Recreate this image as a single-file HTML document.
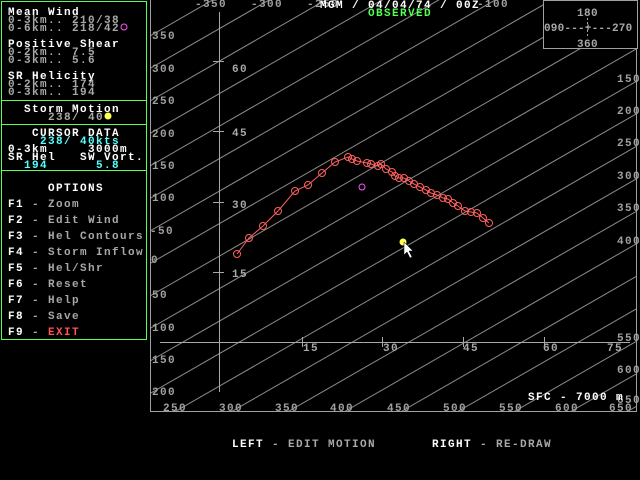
<!DOCTYPE html>
<html><head><meta charset="utf-8"><style>
html,body{margin:0;padding:0;background:#000;width:640px;height:480px;overflow:hidden;}
svg{display:block;}
text{font-family:"Liberation Mono",monospace;font-weight:bold;font-size:11px;letter-spacing:1.4px;}
.g{fill:#a8a8a8}.w{fill:#fff}.c{fill:#55ffff}.gr{fill:#55ff55}.r{fill:#ff5555}
.s{font-size:9.5px;font-weight:normal;fill:#a0a0a0;letter-spacing:0.6px}
</style></head><body>
<svg width="640" height="480" viewBox="0 0 640 480" xmlns="http://www.w3.org/2000/svg">
<rect width="640" height="480" fill="#000"/>
<defs><clipPath id="cp"><rect x="151" y="0" width="485" height="411"/></clipPath></defs>
<g clip-path="url(#cp)" stroke="#8c8c8c" stroke-width="1">
<line x1="150" y1="36" x2="636" y2="-243.5"/>
<line x1="150" y1="68.5" x2="636" y2="-211"/>
<line x1="150" y1="101" x2="636" y2="-178.5"/>
<line x1="150" y1="133.5" x2="636" y2="-146"/>
<line x1="150" y1="166" x2="636" y2="-113.5"/>
<line x1="150" y1="198.5" x2="636" y2="-81"/>
<line x1="150" y1="231" x2="636" y2="-48.5"/>
<line x1="150" y1="263.5" x2="636" y2="-16"/>
<line x1="150" y1="296" x2="636" y2="16.5"/>
<line x1="150" y1="328.5" x2="636" y2="49"/>
<line x1="150" y1="361" x2="636" y2="81.5"/>
<line x1="150" y1="393.5" x2="636" y2="114"/>
<line x1="150" y1="426" x2="636" y2="146.5"/>
<line x1="150" y1="458.5" x2="636" y2="179"/>
<line x1="150" y1="491" x2="636" y2="211.5"/>
<line x1="150" y1="523.5" x2="636" y2="244"/>
<line x1="150" y1="556" x2="636" y2="276.5"/>
<line x1="150" y1="588.5" x2="636" y2="309"/>
<line x1="150" y1="621" x2="636" y2="341.5"/>
<line x1="150" y1="653.5" x2="636" y2="374"/>
<line x1="150" y1="686" x2="636" y2="406.5"/>
<line x1="150" y1="718.5" x2="636" y2="439"/>
</g>
<path d="M150.5 0 V411.5 H636.5 V48" fill="none" stroke="#a0a0a0"/>
<g stroke="#a8a8a8">
<line x1="219.5" y1="12" x2="219.5" y2="392"/>
<line x1="160" y1="342.5" x2="630" y2="342.5"/>
<line x1="213" y1="272.5" x2="224" y2="272.5"/>
<line x1="213" y1="202.5" x2="224" y2="202.5"/>
<line x1="213" y1="131.5" x2="224" y2="131.5"/>
<line x1="213" y1="61.5" x2="224" y2="61.5"/>
<line x1="302.5" y1="337" x2="302.5" y2="347"/>
<line x1="382.5" y1="337" x2="382.5" y2="347"/>
<line x1="463.5" y1="337" x2="463.5" y2="347"/>
<line x1="544.5" y1="337" x2="544.5" y2="347"/>
</g>
<g class="g">
<text x="232" y="277">15</text><text x="232" y="208">30</text><text x="232" y="136">45</text><text x="232" y="72">60</text>
<text x="303" y="351">15</text><text x="383" y="351">30</text><text x="463" y="351">45</text><text x="543" y="351">60</text><text x="607" y="351">75</text>
</g>
<g class="s">
<text x="152" y="39">350</text><text x="152" y="72">300</text><text x="152" y="104">250</text><text x="152" y="137">200</text><text x="152" y="169">150</text><text x="152" y="201">100</text><text x="150" y="234">-50</text><text x="151" y="263">0</text><text x="152" y="298">50</text><text x="152" y="331">100</text><text x="152" y="363">150</text><text x="152" y="395">200</text>
<text x="163" y="411">250</text><text x="219" y="411">300</text><text x="275" y="411">350</text><text x="330" y="411">400</text><text x="387" y="411">450</text><text x="443" y="411">500</text><text x="499" y="411">550</text><text x="555" y="411">600</text><text x="609" y="411">650</text>
<text x="195" y="7">-350</text><text x="251" y="7">-300</text><text x="307" y="7">-250</text><text x="477" y="7">-100</text>
<text x="617" y="82">150</text><text x="617" y="114">200</text><text x="617" y="146">250</text><text x="617" y="179">300</text><text x="617" y="211">350</text><text x="617" y="244">400</text>
<text x="617" y="341">550</text><text x="617" y="373">600</text><text x="617" y="403">650</text>
</g>
<rect x="543.5" y="0.5" width="94" height="48" fill="#000" stroke="#a0a0a0"/>
<g class="g">
<text x="577" y="16" style="letter-spacing:0.4px">180</text><text x="544" y="31" style="letter-spacing:0.2px">090---+---270</text><text x="577" y="47" style="letter-spacing:0.4px">360</text>
</g>
<line x1="587.5" y1="18" x2="587.5" y2="37" stroke="#a8a8a8" stroke-dasharray="2,2"/>
<text x="320" y="8" class="w">MGM / 04/04/74 / 00Z</text>
<text x="368" y="16" class="gr">OBSERVED</text>
<g stroke="#ff6060" fill="none" stroke-width="1">
<polyline points="237,254 249,238 263,226 278,211 295,191 308,185 322,173 335,162 348,157 352,159 357,161 367,163 371,164 378,166 381,164 386,169 392,172 395,176 399,178 404,178 409,181 414,184 420,187 426,190 431,193 437,195 443,198 448,199 453,203 458,206 465,211 471,212 477,213 483,218 489,223"/>
<circle cx="237" cy="254" r="3.5"/><circle cx="249" cy="238" r="3.5"/><circle cx="263" cy="226" r="3.5"/><circle cx="278" cy="211" r="3.5"/><circle cx="295" cy="191" r="3.5"/><circle cx="308" cy="185" r="3.5"/><circle cx="322" cy="173" r="3.5"/><circle cx="335" cy="162" r="3.5"/><circle cx="348" cy="157" r="3.5"/><circle cx="352" cy="159" r="3.5"/><circle cx="357" cy="161" r="3.5"/><circle cx="367" cy="163" r="3.5"/><circle cx="371" cy="164" r="3.5"/><circle cx="378" cy="166" r="3.5"/><circle cx="381" cy="164" r="3.5"/><circle cx="386" cy="169" r="3.5"/><circle cx="392" cy="172" r="3.5"/><circle cx="395" cy="176" r="3.5"/><circle cx="399" cy="178" r="3.5"/><circle cx="404" cy="178" r="3.5"/><circle cx="409" cy="181" r="3.5"/><circle cx="414" cy="184" r="3.5"/><circle cx="420" cy="187" r="3.5"/><circle cx="426" cy="190" r="3.5"/><circle cx="431" cy="193" r="3.5"/><circle cx="437" cy="195" r="3.5"/><circle cx="443" cy="198" r="3.5"/><circle cx="448" cy="199" r="3.5"/><circle cx="453" cy="203" r="3.5"/><circle cx="458" cy="206" r="3.5"/><circle cx="465" cy="211" r="3.5"/><circle cx="471" cy="212" r="3.5"/><circle cx="477" cy="213" r="3.5"/><circle cx="483" cy="218" r="3.5"/><circle cx="489" cy="223" r="3.5"/>
</g>
<circle cx="362" cy="187" r="3" fill="none" stroke="#ff55ff"/>
<circle cx="403" cy="242" r="3.5" fill="#ffff55"/>
<path d="M404 242 L404 255 L407 252 L410 258 L412 257 L409 251 L413 251 Z" fill="#fff" stroke="#000" stroke-width="0.5"/>
<text x="528" y="400" class="w">SFC - 7000 m</text>
<text x="232" y="447" class="w">LEFT</text><text x="272" y="447" class="g">- EDIT MOTION</text>
<text x="432" y="447" class="w">RIGHT</text><text x="480" y="447" class="g">- RE-DRAW</text>
<g fill="none" stroke="#55ff55">
<rect x="1.5" y="1.5" width="145" height="338"/>
<line x1="1" y1="100.5" x2="147" y2="100.5"/>
<line x1="1" y1="124.5" x2="147" y2="124.5"/>
<line x1="1" y1="170.5" x2="147" y2="170.5"/>
</g>
<text x="8" y="15" class="w">Mean Wind</text>
<text x="8" y="23" class="g">0-3km.. 210/38</text>
<text x="8" y="31" class="g">0-6km.. 218/42</text>
<circle cx="124" cy="27" r="3" fill="none" stroke="#ff55ff"/>
<text x="8" y="47" class="w">Positive Shear</text>
<text x="8" y="55" class="g">0-2km..  7.5</text>
<text x="8" y="63" class="g">0-3km..  5.6</text>
<text x="8" y="79" class="w">SR Helicity</text>
<text x="8" y="87" class="g">0-2km..   174</text>
<text x="8" y="95" class="g">0-3km..   194</text>
<text x="24" y="112" class="w">Storm Motion</text>
<text x="48" y="120" class="g">238/ 40</text>
<circle cx="108" cy="116" r="3.5" fill="#ffff55"/>
<text x="32" y="136" class="w">CURSOR DATA</text>
<text x="40" y="144" class="c">238/ 40kts</text>
<text x="8" y="152" class="w">0-3km</text><text x="88" y="152" class="w">3000m</text>
<text x="8" y="160" class="w">SR Hel</text><text x="80" y="160" class="w">SW Vort.</text>
<text x="24" y="168" class="c">194</text><text x="96" y="168" class="c">5.8</text>
<text x="48" y="191" class="w">OPTIONS</text>
<g class="w"><text x="8" y="207">F1</text><text x="8" y="223">F2</text><text x="8" y="239">F3</text><text x="8" y="255">F4</text><text x="8" y="271">F5</text><text x="8" y="287">F6</text><text x="8" y="303">F7</text><text x="8" y="319">F8</text><text x="8" y="335">F9</text></g>
<g class="g"><text x="32" y="207">-</text><text x="32" y="223">-</text><text x="32" y="239">-</text><text x="32" y="255">-</text><text x="32" y="271">-</text><text x="32" y="287">-</text><text x="32" y="303">-</text><text x="32" y="319">-</text><text x="32" y="335">-</text>
<text x="48" y="207">Zoom</text><text x="48" y="223">Edit Wind</text><text x="48" y="239">Hel Contours</text><text x="48" y="255">Storm Inflow</text><text x="48" y="271">Hel/Shr</text><text x="48" y="287">Reset</text><text x="48" y="303">Help</text><text x="48" y="319">Save</text></g>
<text x="48" y="335" class="r">EXIT</text>
</svg>
</body></html>
